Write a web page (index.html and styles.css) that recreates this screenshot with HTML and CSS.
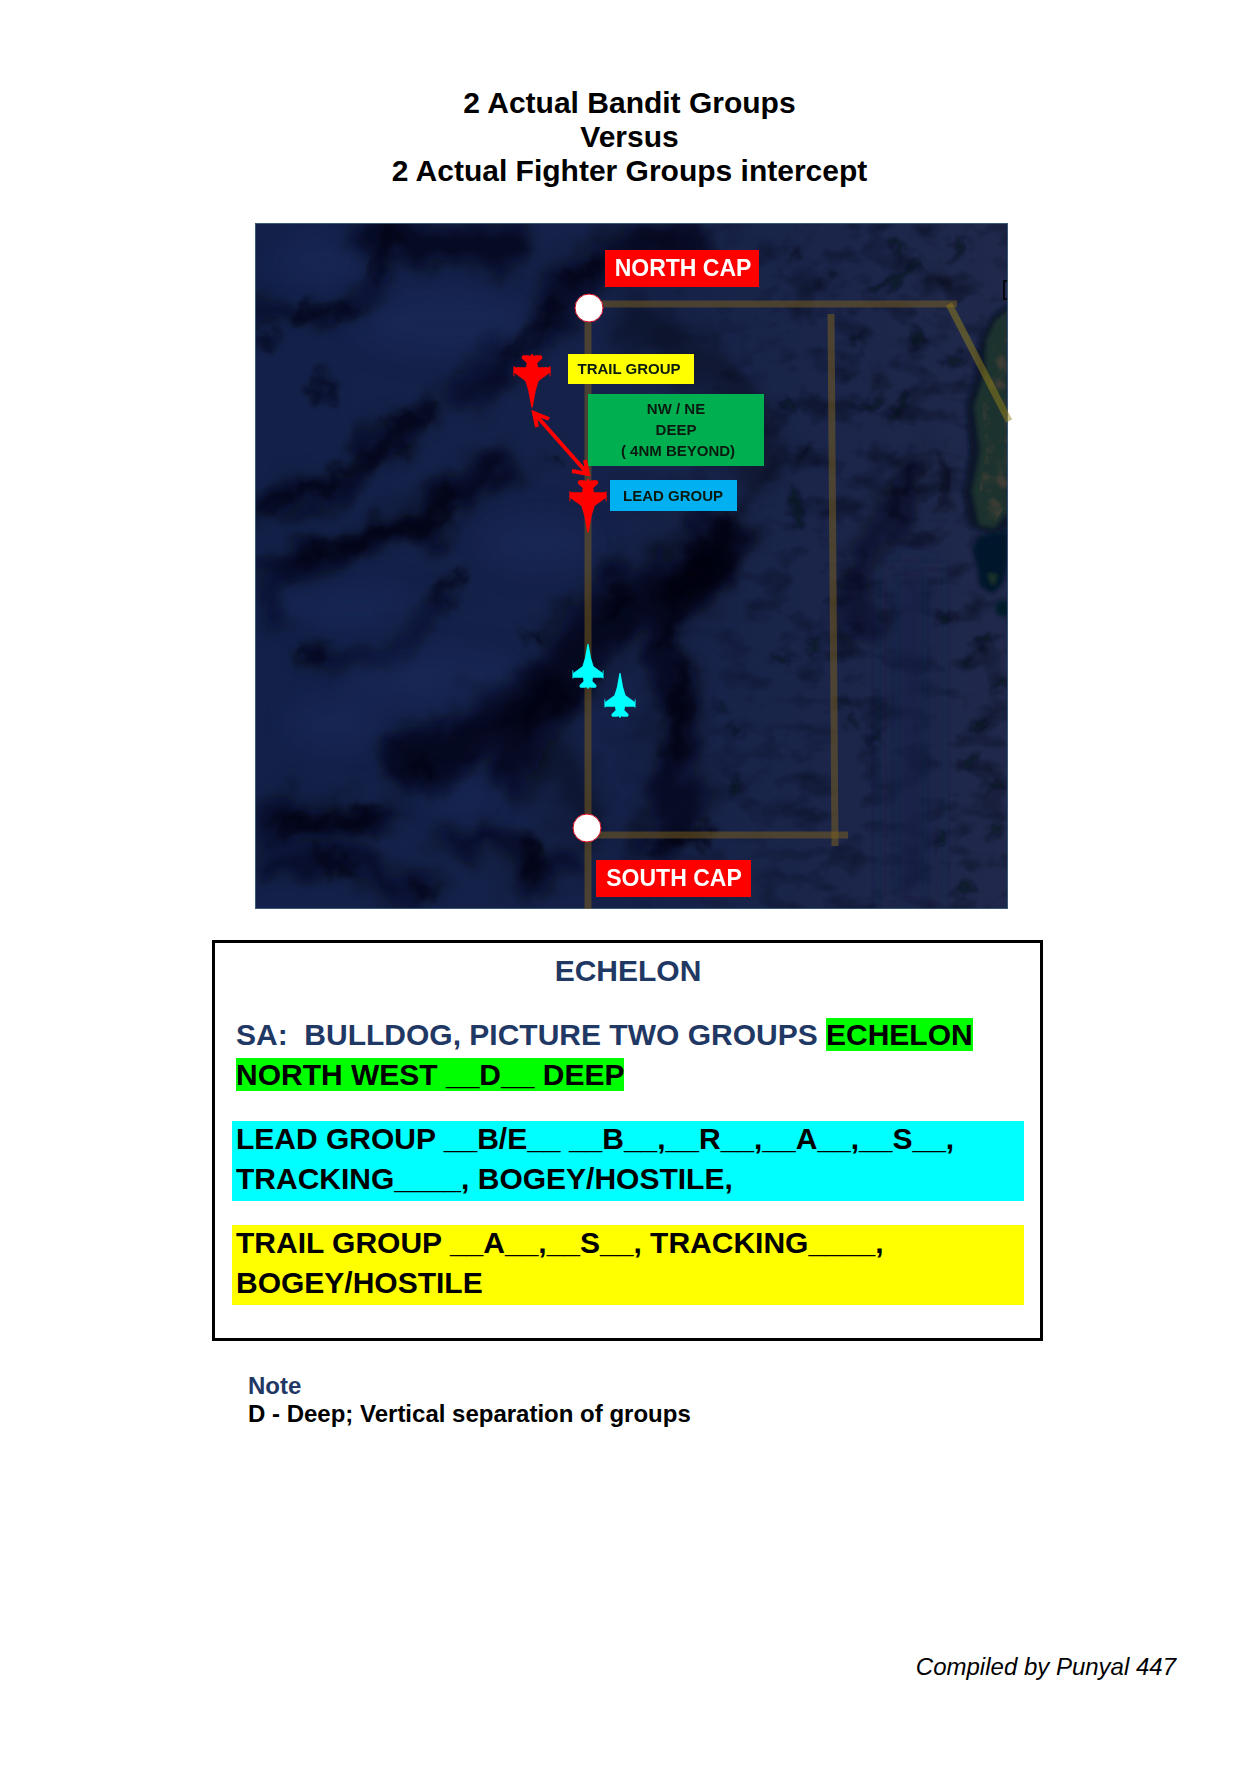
FILE: index.html
```html
<!DOCTYPE html>
<html lang="en">
<head>
<meta charset="utf-8">
<title>2 Actual Bandit Groups Versus 2 Actual Fighter Groups intercept</title>
<link rel="stylesheet" href="styles.css">
</head>
<body class="page">
<header>
  <h1 class="title">2 Actual Bandit Groups<br>Versus<br>2 Actual Fighter Groups intercept</h1>
</header>
<main>
  <figure class="map">
    <svg class="map-svg" viewBox="0 0 753 686" role="img" aria-label="Echelon formation map">
      <defs>
        <clipPath id="frame"><rect width="753" height="686"/></clipPath>
        <linearGradient id="sea" x1="0" y1="0" x2="1" y2="0">
          <stop offset="0" stop-color="#13214a"/><stop offset=".5" stop-color="#152148"/><stop offset="1" stop-color="#20294b"/>
        </linearGradient>
        <linearGradient id="fade" x1="0" y1="0" x2="1" y2="0">
          <stop offset=".45" stop-color="#000"/><stop offset=".75" stop-color="#fff"/>
        </linearGradient>
        <mask id="east"><rect width="753" height="686" fill="url(#fade)"/></mask>
        <filter id="wide" x="-20%" y="-20%" width="140%" height="140%">
          <feGaussianBlur stdDeviation="9" result="b"/>
          <feTurbulence type="fractalNoise" baseFrequency=".018" numOctaves="4" seed="9"/>
          <feDisplacementMap in="b" scale="55" xChannelSelector="R" yChannelSelector="G" result="d"/>
          <feGaussianBlur in="d" stdDeviation="2"/>
        </filter>
        <filter id="glow" x="-50%" y="-50%" width="200%" height="200%"><feGaussianBlur stdDeviation="14"/></filter>
        <filter id="soft" x="-20%" y="-20%" width="140%" height="140%">
          <feGaussianBlur stdDeviation="5" result="b"/>
          <feTurbulence type="fractalNoise" baseFrequency=".045" numOctaves="3" seed="4"/>
          <feDisplacementMap in="b" scale="32" xChannelSelector="R" yChannelSelector="G"/>
        </filter>
        <filter id="fine" x="-20%" y="-20%" width="140%" height="140%"><feGaussianBlur stdDeviation="2"/></filter>
        <filter id="specks" x="-20%" y="-20%" width="140%" height="140%">
          <feGaussianBlur stdDeviation="3" result="b"/>
          <feTurbulence type="fractalNoise" baseFrequency=".08" numOctaves="2" seed="6"/>
          <feDisplacementMap in="b" scale="18" xChannelSelector="R" yChannelSelector="G"/>
        </filter>
        <filter id="ridges" x="0" y="0" width="100%" height="100%" color-interpolation-filters="sRGB">
          <feTurbulence type="fractalNoise" baseFrequency=".028 .04" numOctaves="3" seed="11"/>
          <feColorMatrix values="0 0 0 0 .02  0 0 0 0 .03  0 0 0 0 .09  3.2 0 0 0 -1.55"/>
        </filter>
        <filter id="terrain" x="0" y="0" width="100%" height="100%" color-interpolation-filters="sRGB">
          <feTurbulence type="fractalNoise" baseFrequency=".06" numOctaves="3" seed="3"/>
          <feColorMatrix values="0 0 0 0 .3  0 0 0 0 .26  0 0 0 0 .22  3 0 0 0 -1.3" result="n"/>
          <feComposite in="n" in2="SourceGraphic" operator="in"/>
        </filter>
        <path id="jet" d="M-3-2-6 4-10 1-27 1-31 5-30 11-16 24-18 37H-52L-53 34H-56V64H-53V54L-20 78-11 108-2 158H2L11 108 20 78 53 54V64H56V34H53L52 37H18L16 24 30 11 31 5 27 1H10L6 4 3-2Z"/>
      </defs>
      <g clip-path="url(#frame)">
        <rect width="753" height="686" fill="url(#sea)"/>
        <g mask="url(#east)"><rect width="753" height="686" filter="url(#ridges)" opacity=".45"/></g>
        <rect x="636" y="340" width="40" height="346" fill="#18234a" opacity=".7" filter="url(#glow)"/>
        <g fill="none" stroke="#03060f" stroke-linecap="round" stroke-linejoin="round" filter="url(#wide)">
          <path d="M120 15 180 25 250 20M380 25 440 20" stroke-width="42" opacity=".7"/>
          <path d="M125 55 100 85 0 92" stroke-width="18" opacity=".65"/>
          <path d="M348 38 305 70 290 110 245 135 220 165" stroke-width="36" opacity=".6"/>
          <path d="M180 190 130 215 85 255 5 285" stroke-width="22" opacity=".75"/>
          <path d="M235 250 190 275 175 300 95 317 38 335" stroke-width="32" opacity=".75"/>
          <path d="M0 348H60M25 360V395M45 432 128 430 200 365" stroke-width="18" opacity=".6"/>
          <path d="M462 310 440 350 362 385 328 425 288 465 228 500 165 540" stroke-width="58" opacity=".72"/>
          <path d="M458 342 425 369 415 425 420 529 425 575 408 622" stroke-width="44" opacity=".65"/>
          <path d="M290 480 260 545M20 598 120 592" stroke-width="38" opacity=".7"/>
          <path d="M20 640 90 640 162 665M195 615 278 625 272 665 320 645" stroke-width="24" opacity=".65"/>
          <path d="M665 242 632 292 605 330 605 410" stroke-width="24" opacity=".55"/>
          <path d="M390 100 480 165 500 250M300 540 330 600" stroke-width="46" opacity=".3"/>
        </g>
        <g fill="none" stroke="#010207" stroke-linecap="round" stroke-linejoin="round" filter="url(#soft)" opacity=".6">
          <path d="M135 10 120 50M105 85 40 92M5 118 20 115M65 155 70 175M300 85 250 130M340 45 310 55" stroke-width="12"/>
          <path d="M180 186 140 202 122 228 100 245 84 255 50 268 10 285M150 226V232M295 235 300 238" stroke-width="10"/>
          <path d="M195 270 185 295 120 312 60 330M45 432 70 430M205 355 180 378M275 412 282 418" stroke-width="12"/>
          <path d="M470 300 445 335 460 350 425 369 410 420M350 390 375 375M430 440 420 530M405 618 450 612" stroke-width="17"/>
          <path d="M165 545 175 555M30 600 115 595M65 632 90 645M275 620 285 640 270 655M165 668 175 672" stroke-width="14"/>
          <path d="M542 22 540 35M572 55 574 58M685 54 690 58M622 155 620 162M552 225 545 236M665 245 635 290M690 230 692 285" stroke-width="9"/>
        </g>
        <g fill="none" stroke="#050817" stroke-linecap="round" filter="url(#specks)" opacity=".7">
          <path d="M662 38 650 52 618 68M650 173 636 195M604 184 625 178M465 484H467M478 504 482 508M482 560 478 568M595 496 600 500M618 518 622 514M690 140 710 134M585 478 588 480M556 424 562 423M520 435H532M686 612V618M735 610 742 606M720 505 728 500M712 440 716 436M742 462 748 458M710 542 720 536M738 566 744 560M705 670 714 660M688 395 694 396M725 420 734 416M700 35 706 20M640 20 646 30M530 180 540 186M535 265 545 300M660 110 664 122M600 120 606 112" stroke-width="7"/>
        </g>
        <g filter="url(#glow)" fill="#1d2f62" opacity=".4">
          <ellipse cx="70" cy="38" rx="45" ry="25"/><ellipse cx="190" cy="100" rx="90" ry="34"/><ellipse cx="100" cy="385" rx="80" ry="20"/>
          <ellipse cx="180" cy="455" rx="90" ry="30"/><ellipse cx="80" cy="500" rx="45" ry="24"/><ellipse cx="205" cy="575" rx="36" ry="16"/><ellipse cx="285" cy="320" rx="60" ry="30"/>
        </g>
        <g filter="url(#fine)">
          <path d="M753 80 736 94 724 118 722 148 711 182 715 228 708 268 714 304 735 311 753 306Z" fill="#07152a"/>
          <path d="M753 87 740 98 731 118 730 148 719 184 725 228 717 268 724 302 740 305 753 288Z" fill="#1c302e"/>
          <path d="M753 308 724 314 717 325 723 347 724 362 737 371 747 362 753 340Z" fill="#06192a"/>
          <path d="M732 350 738 364 743 352Z" fill="#1c3429"/>
          <circle cx="748" cy="385" r="8" fill="#061b2a"/>
        </g>
        <path d="M753 100 745 106 738 124 737 150 727 184 731 228 724 268 730 296 740 298 753 280Z" filter="url(#terrain)" opacity=".7"/>
        <path d="M753 58H749V76H753" fill="none" stroke="#04070d" stroke-width="2"/>
      </g>
      <rect x=".5" y=".5" width="752" height="685" fill="none" stroke="#3c5878"/>
      <g fill="none" stroke="#80621c" stroke-opacity=".5" stroke-width="7">
        <path d="M333 85V686"/><path d="M334 81H702"/><path d="M576 91 580 623"/><path d="M332 612H593"/><path d="M694 81 754 198" stroke="#958218"/>
      </g>
      <g fill="#fff" stroke="#d90b20" stroke-width="1"><circle cx="334" cy="85" r="14"/><circle cx="332" cy="605" r="14"/></g>
      <g class="map-label">
        <rect x="350" y="27" width="154" height="37" fill="#f00"/><text class="cap" x="428" y="53">NORTH CAP</text>
        <rect x="341" y="637" width="155" height="37" fill="#f00"/><text class="cap" x="419" y="663">SOUTH CAP</text>
        <rect x="313" y="131" width="126" height="30" fill="#ff0"/><text x="374" y="151">TRAIL GROUP</text>
        <rect x="333" y="171" width="176" height="72" fill="#00b050"/>
        <text x="421" y="191">NW / NE</text><text x="421" y="212">DEEP</text><text x="423" y="233">( 4NM BEYOND)</text>
        <rect x="355" y="257" width="127" height="31" fill="#00b0f0"/><text x="418" y="278">LEAD GROUP</text>
      </g>
      <g fill="#f00"><use href="#jet" transform="translate(277 132) scale(.333)"/><use href="#jet" transform="translate(333 257) scale(.333)"/></g>
      <g fill="#0ff"><use href="#jet" transform="translate(333 465) scale(.278 -.278)"/><use href="#jet" transform="translate(365 494) scale(.278 -.278)"/></g>
      <path d="M279 190 333 251M294 196 279 190 282 204M317 248 333 251 330 237" fill="none" stroke="#f00" stroke-width="4"/>
    </svg>
  </figure>
  <section class="call">
    <h2 class="call-title">ECHELON</h2>
    <p class="line picture">SA:&nbsp; BULLDOG, PICTURE TWO GROUPS <mark class="mark">ECHELON</mark> <mark class="mark">NORTH WEST __D__ DEEP</mark></p>
    <p class="line lead">LEAD GROUP __B/E__ __B__,__R__,__A__,__S__, TRACKING____, BOGEY/HOSTILE,</p>
    <p class="line trail">TRAIL GROUP __A__,__S__, TRACKING____, BOGEY/HOSTILE</p>
  </section>
  <section class="note">
    <h3 class="note-title">Note</h3>
    <p class="note-text">D - Deep; Vertical separation of groups</p>
  </section>
</main>
<footer class="footer">Compiled by Punyal 447</footer>
</body>
</html>
```

FILE: styles.css
```css
* {
  box-sizing: border-box;
  margin: 0;
}

.page {
  display: flex;
  flex-direction: column;
  min-height: 100vh;
  padding: 86px 0 105px;
  background: #fff;
  color: #000;
  font-family: "Liberation Sans", Arial, sans-serif;
}

.title {
  font-size: 30px;
  line-height: 34px;
  text-align: center;
}

.map {
  margin: 35px 251px 31px 255px;
}

.map-svg {
  display: block;
  width: 100%;
  overflow: visible;
}

.map-label {
  font-size: 15px;
  font-weight: bold;
  text-anchor: middle;
}

.map-label text {
  fill: #0a1a10;
}

.map-label .cap {
  font-size: 23px;
  fill: #fff;
}

.call {
  display: flex;
  flex-direction: column;
  gap: 22px;
  margin: 0 216px 0 212px;
  padding: 8px 16px 33px 17px;
  border: 3px solid #000;
  font-size: 30px;
  font-weight: bold;
  line-height: 40px;
}

.call-title {
  padding-bottom: 2px;
  color: #1f3864;
  font-size: 30px;
  text-align: center;
}

.line {
  padding: 0 4px 2px;
}

.picture {
  color: #1f3864;
}

.mark {
  background: #0f0;
  color: #000;
}

.lead {
  background: linear-gradient(transparent 2px, #0ff 2px);
}

.trail {
  background: linear-gradient(transparent 2px, #ff0 2px);
}

.note {
  margin: 31px 216px 0 248px;
  font-size: 24px;
  font-weight: bold;
  line-height: 28px;
}

.note-title {
  color: #1f3864;
  font-size: 24px;
}

.footer {
  margin-top: auto;
  padding-right: 83px;
  font-size: 24px;
  font-style: italic;
  line-height: 28px;
  text-align: right;
}
```
